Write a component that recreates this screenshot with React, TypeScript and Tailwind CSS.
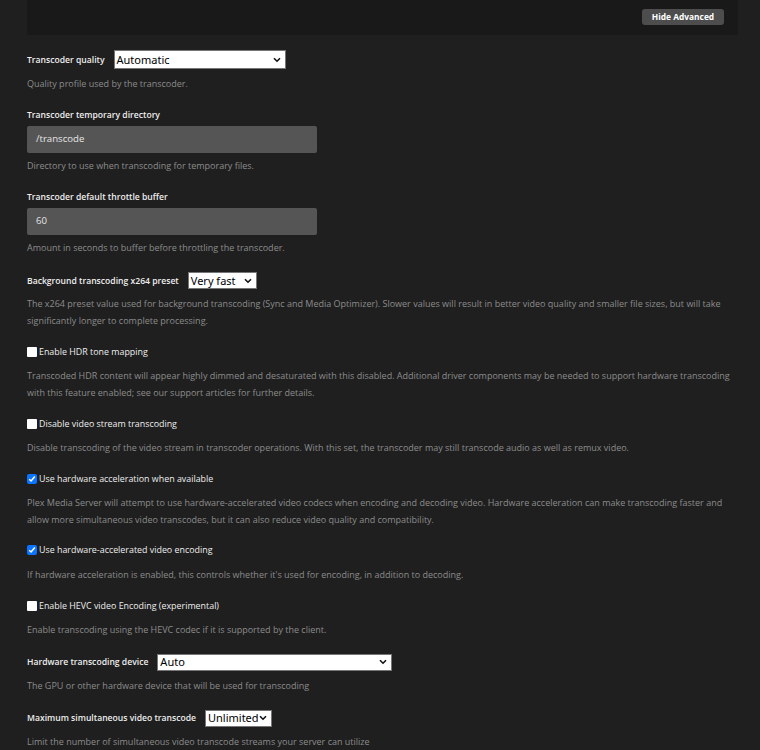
import { ReactNode } from "react";

const font = { fontFamily: '"Open Sans", "Noto Sans", sans-serif' };

const Chevron = () => (
  <svg width="8" height="6" viewBox="0 0 8 6" className="shrink-0">
    <path d="M1 1.2 L4 4.2 L7 1.2" fill="none" stroke="#111" strokeWidth="1.6" />
  </svg>
);

const Select = ({ value, width, height = "h-[17px]" }: { value: string; width: string; height?: string }) => (
  <div
    className={`${width} ${height} flex items-center justify-between bg-white border border-[#767676] pl-[2px] pr-[4px] text-[11px] text-black leading-none`}
    style={{ fontFamily: '"Noto Sans", "Open Sans", sans-serif' }}
  >
    <span className="-mt-px">{value}</span>
    <Chevron />
  </div>
);

const Checkbox = ({ checked }: { checked?: boolean }) =>
  checked ? (
    <span className="w-[10px] h-[10px] rounded-[2px] bg-[#0b75ff] flex items-center justify-center shrink-0">
      <svg width="8" height="8" viewBox="0 0 8 8">
        <path d="M1.2 4.2 L3.1 6 L6.8 1.6" fill="none" stroke="white" strokeWidth="1.5" />
      </svg>
    </span>
  ) : (
    <span className="w-[10px] h-[10px] rounded-[1px] bg-white shrink-0" />
  );

const Desc = ({ gap, children }: { gap: string; children: ReactNode }) => (
  <p className={`${gap} text-[9px] leading-[16.6px] text-[#8c8c8c]`}>{children}</p>
);

const Label = ({ children }: { children: ReactNode }) => (
  <div className="text-[8.6px] font-semibold text-[#eeeeee] leading-[14px] whitespace-nowrap">{children}</div>
);

const SelectRow = ({ label, value, width, height, desc }: { label: string; value: string; width: string; height?: string; desc: ReactNode }) => (
  <div className="mb-[15.5px]">
    <div className="flex items-center gap-[9px]">
      <Label>{label}</Label>
      <Select value={value} width={width} height={height} />
    </div>
    <Desc gap="mt-[7px]">{desc}</Desc>
  </div>
);

const TextRow = ({ label, value, desc }: { label: string; value: string; desc: ReactNode }) => (
  <div className="mb-[15.5px]">
    <Label>{label}</Label>
    <div className="mt-[4px] w-[290px] h-[27px] rounded-[2px] bg-[#555555] flex items-center px-[9px] text-[9.6px] text-[#e6e6e6]">
      {value}
    </div>
    <Desc gap="mt-[5px]">{desc}</Desc>
  </div>
);

const CheckRow = ({ label, checked, desc }: { label: string; checked?: boolean; desc: ReactNode }) => (
  <div className="mb-[15px]">
    <div className="flex items-center gap-[2px] h-[14px]">
      <Checkbox checked={checked} />
      <span className="text-[8.9px] leading-[14px] text-[#eeeeee]">{label}</span>
    </div>
    <Desc gap="mt-[9.5px]">{desc}</Desc>
  </div>
);

export default function App() {
  return (
    <div className="min-h-[750px] w-[760px] bg-[#1f1f1f] overflow-hidden" style={font}>
      <div className="ml-[27px] mr-[22px]">
        <div className="h-[35px] bg-[#191919] flex items-start justify-end pr-[14px] pt-[9px]">
          <button className="h-[16px] w-[82px] rounded-[3px] bg-[#4d4d4d] text-white text-[8.4px] font-bold leading-none">
            Hide Advanced
          </button>
        </div>

        <div className="pt-[15px]">
          <SelectRow
            label="Transcoder quality"
            value="Automatic"
            width="w-[172px]"
            height="h-[19px]"
            desc="Quality profile used by the transcoder."
          />
          <TextRow
            label="Transcoder temporary directory"
            value="/transcode"
            desc="Directory to use when transcoding for temporary files."
          />
          <TextRow
            label="Transcoder default throttle buffer"
            value="60"
            desc="Amount in seconds to buffer before throttling the transcoder."
          />
          <SelectRow
            label="Background transcoding x264 preset"
            value="Very fast"
            width="w-[69px]"
            desc="The x264 preset value used for background transcoding (Sync and Media Optimizer). Slower values will result in better video quality and smaller file sizes, but will take significantly longer to complete processing."
          />
          <CheckRow
            label="Enable HDR tone mapping"
            desc="Transcoded HDR content will appear highly dimmed and desaturated with this disabled. Additional driver components may be needed to support hardware transcoding with this feature enabled; see our support articles for further details."
          />
          <CheckRow
            label="Disable video stream transcoding"
            desc="Disable transcoding of the video stream in transcoder operations. With this set, the transcoder may still transcode audio as well as remux video."
          />
          <CheckRow
            label="Use hardware acceleration when available"
            checked
            desc="Plex Media Server will attempt to use hardware-accelerated video codecs when encoding and decoding video. Hardware acceleration can make transcoding faster and allow more simultaneous video transcodes, but it can also reduce video quality and compatibility."
          />
          <CheckRow
            label="Use hardware-accelerated video encoding"
            checked
            desc="If hardware acceleration is enabled, this controls whether it's used for encoding, in addition to decoding."
          />
          <CheckRow
            label="Enable HEVC video Encoding (experimental)"
            desc="Enable transcoding using the HEVC codec if it is supported by the client."
          />
          <SelectRow
            label="Hardware transcoding device"
            value="Auto"
            width="w-[235px]"
            desc="The GPU or other hardware device that will be used for transcoding"
          />
          <SelectRow
            label="Maximum simultaneous video transcode"
            value="Unlimited"
            width="w-[67px]"
            desc="Limit the number of simultaneous video transcode streams your server can utilize"
          />
        </div>
      </div>
    </div>
  );
}
